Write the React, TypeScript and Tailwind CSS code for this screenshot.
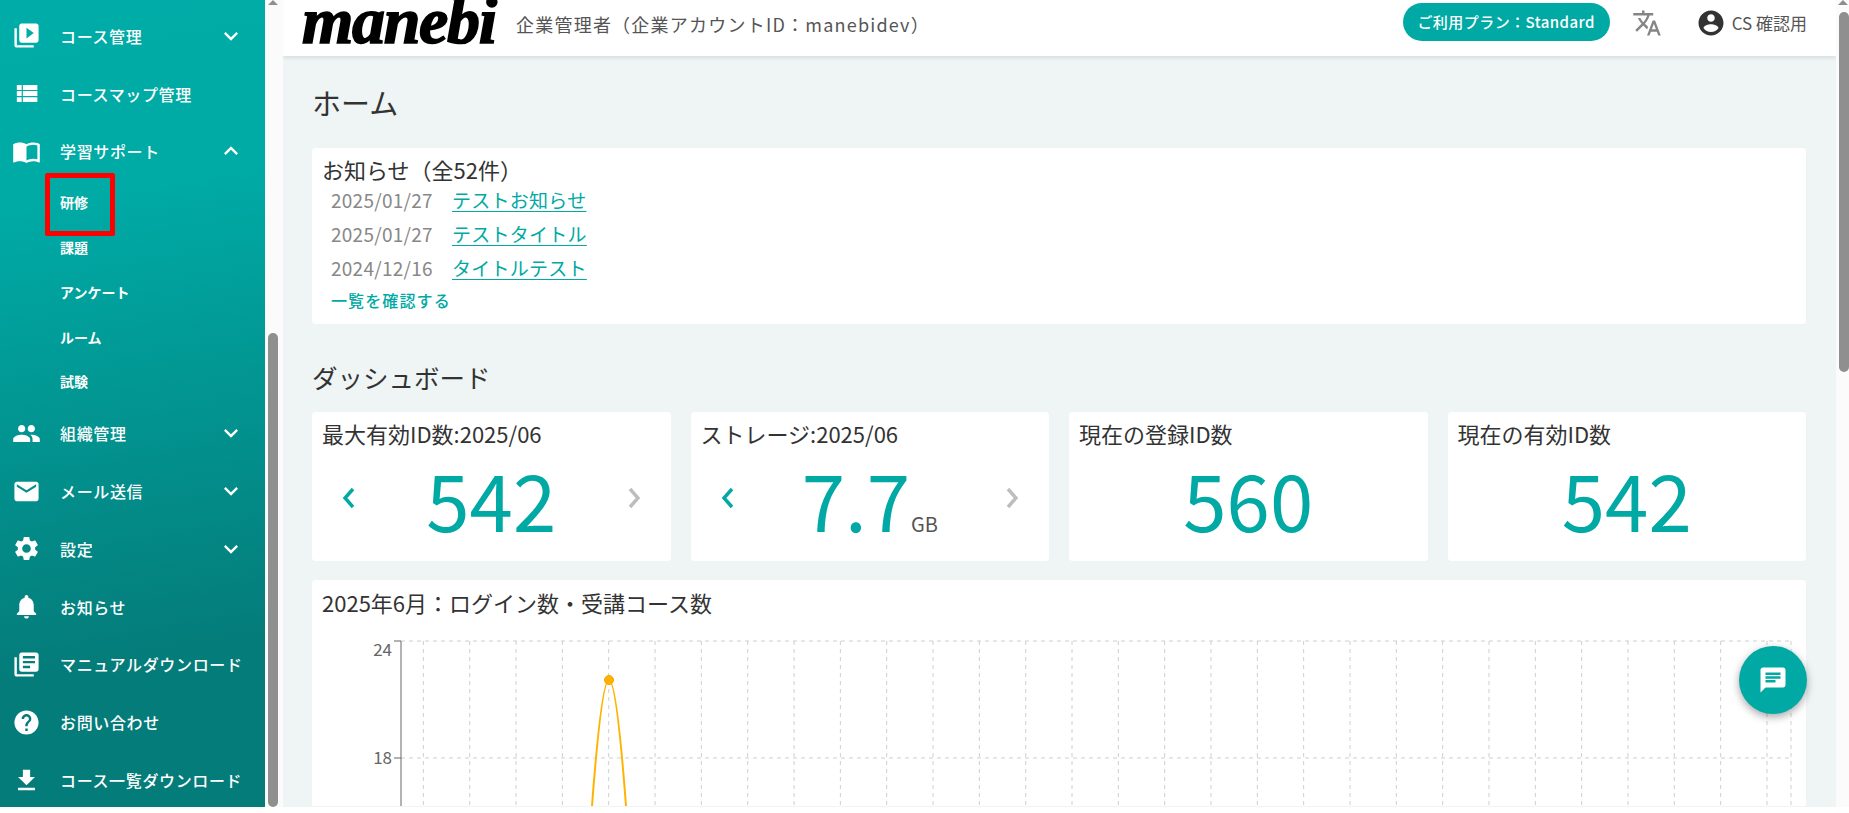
import React from "react";

const P = {
  video: "M4 6H2v14c0 1.1.9 2 2 2h14v-2H4V6zm16-4H8c-1.1 0-2 .9-2 2v12c0 1.1.9 2 2 2h12c1.1 0 2-.9 2-2V4c0-1.1-.9-2-2-2zm-8 12.5v-9l6 4.5-6 4.5z",
  list: "M4 14h4v-4H4v4zm0 5h4v-4H4v4zM4 9h4V5H4v4zm5 5h12v-4H9v4zm0 5h12v-4H9v4zM9 5v4h12V5H9z",
  book: "M21 5c-1.11-.35-2.33-.5-3.5-.5-1.95 0-4.05.4-5.5 1.5-1.45-1.1-3.55-1.5-5.5-1.5S2.45 4.9 1 6v14.65c0 .25.25.5.5.5.1 0 .15-.05.25-.05C3.1 20.45 5.05 20 6.5 20c1.95 0 4.05.4 5.5 1.5 1.35-.85 3.8-1.5 5.5-1.5 1.65 0 3.35.3 4.75 1.05.1.05.15.05.25.05.25 0 .5-.25.5-.5V6c-.6-.45-1.25-.75-2-1zm0 13.5c-1.1-.35-2.3-.5-3.5-.5-1.7 0-4.15.65-5.5 1.5V8c1.35-.85 3.8-1.5 5.5-1.5 1.2 0 2.4.15 3.5.5v11.5z",
  people: "M16 11c1.66 0 2.99-1.34 2.99-3S17.66 5 16 5c-1.66 0-3 1.34-3 3s1.34 3 3 3zm-8 0c1.66 0 2.99-1.34 2.99-3S9.66 5 8 5C6.34 5 5 6.34 5 8s1.34 3 3 3zm0 2c-2.33 0-7 1.17-7 3.5V19h14v-2.5c0-2.33-4.67-3.5-7-3.5zm8 0c-.29 0-.62.02-.97.05 1.16.84 1.97 1.97 1.97 3.45V19h6v-2.5c0-2.33-4.67-3.5-7-3.5z",
  mail: "M20 4H4c-1.1 0-1.99.9-1.99 2L2 18c0 1.1.9 2 2 2h16c1.1 0 2-.9 2-2V6c0-1.1-.9-2-2-2zm0 4l-8 5-8-5V6l8 5 8-5v2z",
  gear: "M19.14 12.94c.04-.3.06-.61.06-.94 0-.32-.02-.64-.07-.94l2.03-1.58c.18-.14.23-.41.12-.61l-1.92-3.32c-.12-.22-.37-.29-.59-.22l-2.39.96c-.5-.38-1.03-.7-1.62-.94l-.36-2.54c-.04-.24-.24-.41-.48-.41h-3.84c-.24 0-.43.17-.47.41l-.36 2.54c-.59.24-1.13.57-1.62.94l-2.39-.96c-.22-.08-.47 0-.59.22L2.74 8.87c-.12.21-.08.47.12.61l2.03 1.58c-.05.3-.09.63-.09.94s.02.64.07.94l-2.03 1.58c-.18.14-.23.41-.12.61l1.92 3.32c.12.22.37.29.59.22l2.39-.96c.5.38 1.03.7 1.62.94l.36 2.54c.05.24.24.41.48.41h3.84c.24 0 .44-.17.47-.41l.36-2.54c.59-.24 1.13-.56 1.62-.94l2.39.96c.22.08.47 0 .59-.22l1.92-3.32c.12-.22.07-.47-.12-.61l-2.01-1.58zM12 15.6c-1.98 0-3.6-1.62-3.6-3.6s1.62-3.6 3.6-3.6 3.6 1.62 3.6 3.6-1.62 3.6-3.6 3.6z",
  bell: "M12 22c1.1 0 2-.9 2-2h-4c0 1.1.89 2 2 2zm6-6v-5c0-3.07-1.64-5.64-4.5-6.32V4c0-.83-.67-1.5-1.5-1.5s-1.5.67-1.5 1.5v.68C7.63 5.36 6 7.92 6 11v5l-2 2v1h16v-1l-2-2z",
  books: "M4 6H2v14c0 1.1.9 2 2 2h14v-2H4V6zm16-4H8c-1.1 0-2 .9-2 2v12c0 1.1.9 2 2 2h12c1.1 0 2-.9 2-2V4c0-1.1-.9-2-2-2zm-1 9H9V9h10v2zm-4 4H9v-2h6v2zm4-8H9V5h10v2z",
  help: "M12 2C6.48 2 2 6.48 2 12s4.48 10 10 10 10-4.48 10-10S17.52 2 12 2zm1 17h-2v-2h2v2zm2.07-7.75l-.9.92C13.45 12.9 13 13.5 13 15h-2v-.5c0-1.1.45-2.1 1.17-2.83l1.24-1.26c.37-.36.59-.86.59-1.41 0-1.1-.9-2-2-2s-2 .9-2 2H8c0-2.21 1.79-4 4-4s4 1.79 4 4c0 .88-.36 1.68-.93 2.25z",
  get: "M19 9h-4V3H9v6H5l7 7 7-7zM5 18v2h14v-2H5z",
  more: "M16.59 8.59L12 13.17 7.41 8.59 6 10l6 6 6-6z",
  less: "M12 8l-6 6 1.41 1.41L12 10.83l4.59 4.58L18 14z",
  chat: "M20 2H4c-1.1 0-1.99.9-1.99 2L2 22l4-4h14c1.1 0 2-.9 2-2V4c0-1.1-.9-2-2-2zM6 9h12v2H6V9zm8 5H6v-2h8v2zm4-6H6V6h12v2z",
  account: "M12 2C6.48 2 2 6.48 2 12s4.48 10 10 10 10-4.48 10-10S17.52 2 12 2zm0 3c1.66 0 3 1.34 3 3s-1.34 3-3 3-3-1.34-3-3 1.34-3 3-3zm0 14.2c-2.5 0-4.71-1.28-6-3.22.03-1.99 4-3.08 6-3.08 1.99 0 5.97 1.09 6 3.08-1.29 1.94-3.5 3.22-6 3.22z",
  translate: "M12.87 15.07l-2.54-2.51.03-.03c1.74-1.94 2.98-4.17 3.71-6.53H17V4h-7V2H8v2H1v1.99h11.17C11.5 7.92 10.44 9.75 9 11.35 8.07 10.32 7.3 9.19 6.69 8h-2c.73 1.63 1.73 3.17 2.98 4.56l-5.09 5.02L4 19l5-5 3.11 3.11.76-2.04zM18.5 10h-2L12 22h2l1.12-3h4.75L21 22h2l-4.5-12zm-2.62 7l1.62-4.33L19.12 17h-3.24z",
};

function Icon({ d, className }: { d: string; className?: string }) {
  return (
    <svg viewBox="0 0 24 24" fill="currentColor" className={className}>
      <path d={d} />
    </svg>
  );
}

function NavRow({ icon, label, chevron }: { icon: string; label: string; chevron?: "more" | "less" }) {
  return (
    <div className="flex h-[57.8px] items-center">
      <Icon d={icon} className="ml-[12px] h-[29px] w-[29px] shrink-0" />
      <span className="ml-[19px] flex-1 whitespace-nowrap text-[16px] font-medium tracking-[0.04em]">{label}</span>
      {chevron && <Icon d={P[chevron]} className="mr-[20px] h-[28px] w-[28px] shrink-0" />}
    </div>
  );
}

function SubRow({ label }: { label: string }) {
  return (
    <div className="flex h-[44.8px] items-center pl-[60px] text-[14px] font-bold">{label}</div>
  );
}

function Stat({ title, value, unit, arrows }: { title: string; value: string; unit?: string; arrows?: boolean }) {
  return (
    <div className="flex h-[149px] flex-col rounded-[4px] bg-white">
      <div className="mt-[7px] pl-[10px] text-[22px] leading-[28px] text-[#333]">{title}</div>
      <div className="flex flex-1 items-center justify-between px-[30px] pb-[13px]">
        {arrows ? <Chevron dir="left" color="#00a9a4" /> : <span />}
        <div className="flex items-baseline text-[78px] font-normal leading-[80px] text-[#00a9a4]">
          {value}
          {unit && <span className="ml-[1px] text-[20px] font-normal leading-none text-[#555]">{unit}</span>}
        </div>
        {arrows ? <Chevron dir="right" color="#bdbdbd" /> : <span />}
      </div>
    </div>
  );
}

function Chevron({ dir, color }: { dir: "left" | "right"; color: string }) {
  return (
    <svg width="14" height="22" viewBox="0 0 14 22" fill="none" stroke={color} strokeWidth="3.4">
      <path d={dir === "left" ? "M11 2 L3 11 L11 20" : "M3 2 L11 11 L3 20"} />
    </svg>
  );
}

function Chart() {
  const xs = Array.from({ length: 30 }, (_, i) => 423.4 + i * 46.33);
  const o = 312;
  const top = 61;
  return (
    <svg width="1494" height="226" className="block" fill="none">
      <g stroke="#cfcfcf" strokeDasharray="4 4" strokeWidth="1">
        <line x1={401 - o} y1={top} x2={1791 - o} y2={top} />
        <line x1={401 - o} y1={top + 117} x2={1791 - o} y2={top + 117} />
        {xs.map((x) => (
          <line key={x} x1={x - o} y1={top} x2={x - o} y2={226} />
        ))}
        <line x1={1791 - o} y1={top} x2={1791 - o} y2={226} />
      </g>
      <g stroke="#666" strokeWidth="1">
        <line x1={401 - o} y1={top} x2={401 - o} y2={226} />
        <line x1={394 - o} y1={top} x2={401 - o} y2={top} />
        <line x1={394 - o} y1={top + 117} x2={401 - o} y2={top + 117} />
      </g>
      <text x={392 - o} y={top + 15} textAnchor="end" fontSize="17" fill="#666" stroke="none">24</text>
      <text x={392 - o} y={top + 123} textAnchor="end" fontSize="17" fill="#666" stroke="none">18</text>
      <path d={`M${592 - o} 226 C${597 - o} 160 ${603 - o} 100 ${609 - o} 100 C${615 - o} 100 ${621 - o} 160 ${626 - o} 226`} stroke="#ffb300" strokeWidth="2" />
      <circle cx={609 - o} cy={100} r="4.5" fill="#ffb300" stroke="#ffa000" strokeWidth="1" />
    </svg>
  );
}

export default function App() {
  return (
    <div className="relative h-[813px] w-[1849px] overflow-hidden bg-white font-['Noto_Sans_CJK_JP','Noto_Sans',sans-serif]">
      <div className="flex h-[807px]">
        <aside className="h-full w-[265px] shrink-0 overflow-hidden bg-[linear-gradient(170deg,#00aca7_0%,#00aaa5_25%,#047c7a_80%,#047c7a_100%)] pt-[7px] text-white">
          <NavRow icon={P.video} label="コース管理" chevron="more" />
          <NavRow icon={P.list} label="コースマップ管理" />
          <NavRow icon={P.book} label="学習サポート" chevron="less" />
          <SubRow label="研修" />
          <SubRow label="課題" />
          <SubRow label="アンケート" />
          <SubRow label="ルーム" />
          <SubRow label="試験" />
          <NavRow icon={P.people} label="組織管理" chevron="more" />
          <NavRow icon={P.mail} label="メール送信" chevron="more" />
          <NavRow icon={P.gear} label="設定" chevron="more" />
          <NavRow icon={P.bell} label="お知らせ" />
          <NavRow icon={P.books} label="マニュアルダウンロード" />
          <NavRow icon={P.help} label="お問い合わせ" />
          <NavRow icon={P.get} label="コース一覧ダウンロード" />
        </aside>

        <div className="flex h-full w-[18px] shrink-0 flex-col items-center bg-[#fbfbfb] pr-[2px]">
          <div className="mt-0 h-0 w-0 border-x-[5px] border-b-[5px] border-x-transparent border-b-[#8f8f8f]" />
          <div className="mt-[328px] w-[10px] flex-1 rounded-[5px] bg-[#8f8f8f]" />
        </div>

        <main className="flex h-full min-w-0 flex-1 flex-col overflow-hidden bg-[#eff5f5]">
          <header className="z-10 flex h-[56px] shrink-0 items-center bg-white pl-[19px] pr-[29px] shadow-[0_2px_4px_rgba(0,0,0,0.1)]">
            <div className="-mt-[14px] w-[214px] shrink-0 whitespace-nowrap font-['Liberation_Serif',serif] text-[66px] font-bold italic leading-[70px] tracking-[-0.02em] text-black [-webkit-text-stroke:1.6px_black]">
              manebi
            </div>
            <div className="-mt-[8px] whitespace-nowrap text-[18px] leading-[24px] tracking-[0.068em] text-[#555]">
              企業管理者（企業アカウントID：manebidev）
            </div>
            <div className="-mt-[12px] ml-auto flex h-[38px] w-[207px] items-center justify-center rounded-full bg-[#00a9a4] text-[15px] font-medium tracking-[0.03em] text-white">
              ご利用プラン：Standard
            </div>
            <Icon d={P.translate} className="-mt-[10px] ml-[22px] h-[30px] w-[30px] text-[#858585]" />
            <Icon d={P.account} className="-mt-[10px] ml-[34px] h-[30px] w-[30px] text-[#333]" />
            <span className="-mt-[10px] ml-[6px] whitespace-nowrap text-[17px] text-[#555]">CS 確認用</span>
          </header>

          <div className="flex-1 overflow-hidden pl-[29px] pr-[30px]">
            <h1 className="mt-[26px] h-[40px] text-[29px] font-normal leading-[40px] text-[#333]">ホーム</h1>
            <section className="mt-[26px] h-[176px] rounded-[4px] bg-white pl-[10px] pt-[7px]">
              <div className="text-[22px] leading-[28px] text-[#333]">お知らせ（全52件）</div>
              <div className="pl-[9px]">
                {[
                  ["2025/01/27", "テストお知らせ"],
                  ["2025/01/27", "テストタイトル"],
                  ["2024/12/16", "タイトルテスト"],
                ].map(([d, t]) => (
                  <div key={t + d} className="flex h-[34px] items-center text-[19px] tracking-[0.26px]">
                    <span className="w-[121px] text-[#888]">{d}</span>
                    <span className="text-[#00a9a4] underline underline-offset-[3px]">{t}</span>
                  </div>
                ))}
                <div className="-mt-[1px] text-[16px] font-medium leading-[32px] tracking-[0.07em] text-[#00a9a4]">一覧を確認する</div>
              </div>
            </section>
            <h2 className="mt-[35px] h-[36px] text-[25.5px] font-normal leading-[36px] text-[#333]">ダッシュボード</h2>
            <div className="mt-[17px] grid grid-cols-4 gap-[20px]">
              <Stat title="最大有効ID数:2025/06" value="542" arrows />
              <Stat title="ストレージ:2025/06" value="7.7" unit="GB" arrows />
              <Stat title="現在の登録ID数" value="560" />
              <Stat title="現在の有効ID数" value="542" />
            </div>
            <section className="mt-[19px] rounded-t-[4px] bg-white">
              <div className="pl-[10px] pt-[8px] text-[22px] leading-[28px] text-[#333]">2025年6月：ログイン数・受講コース数</div>
              <div className="-mt-[36px]">
                <Chart />
              </div>
            </section>
          </div>
        </main>

        <div className="flex h-full w-[13px] shrink-0 flex-col items-end bg-[#fbfbfb]">
          <div className="mr-[1px] h-0 w-0 border-x-[5px] border-b-[5px] border-x-transparent border-b-[#8f8f8f]" />
          <div className="mt-[7px] h-[360px] w-[10px] rounded-[5px] bg-[#8f8f8f]" />
        </div>
      </div>

      <div className="absolute left-[45px] top-[173px] h-[63px] w-[70px] rounded-[2px] border-[5px] border-[#ff0000]" />

      <div className="absolute left-[1739px] top-[646px] flex h-[68px] w-[68px] items-center justify-center rounded-full bg-[#00a9a4] text-white shadow-[0_3px_8px_rgba(0,0,0,0.35)]">
        <Icon d={P.chat} className="h-[30px] w-[30px]" />
      </div>
    </div>
  );
}
